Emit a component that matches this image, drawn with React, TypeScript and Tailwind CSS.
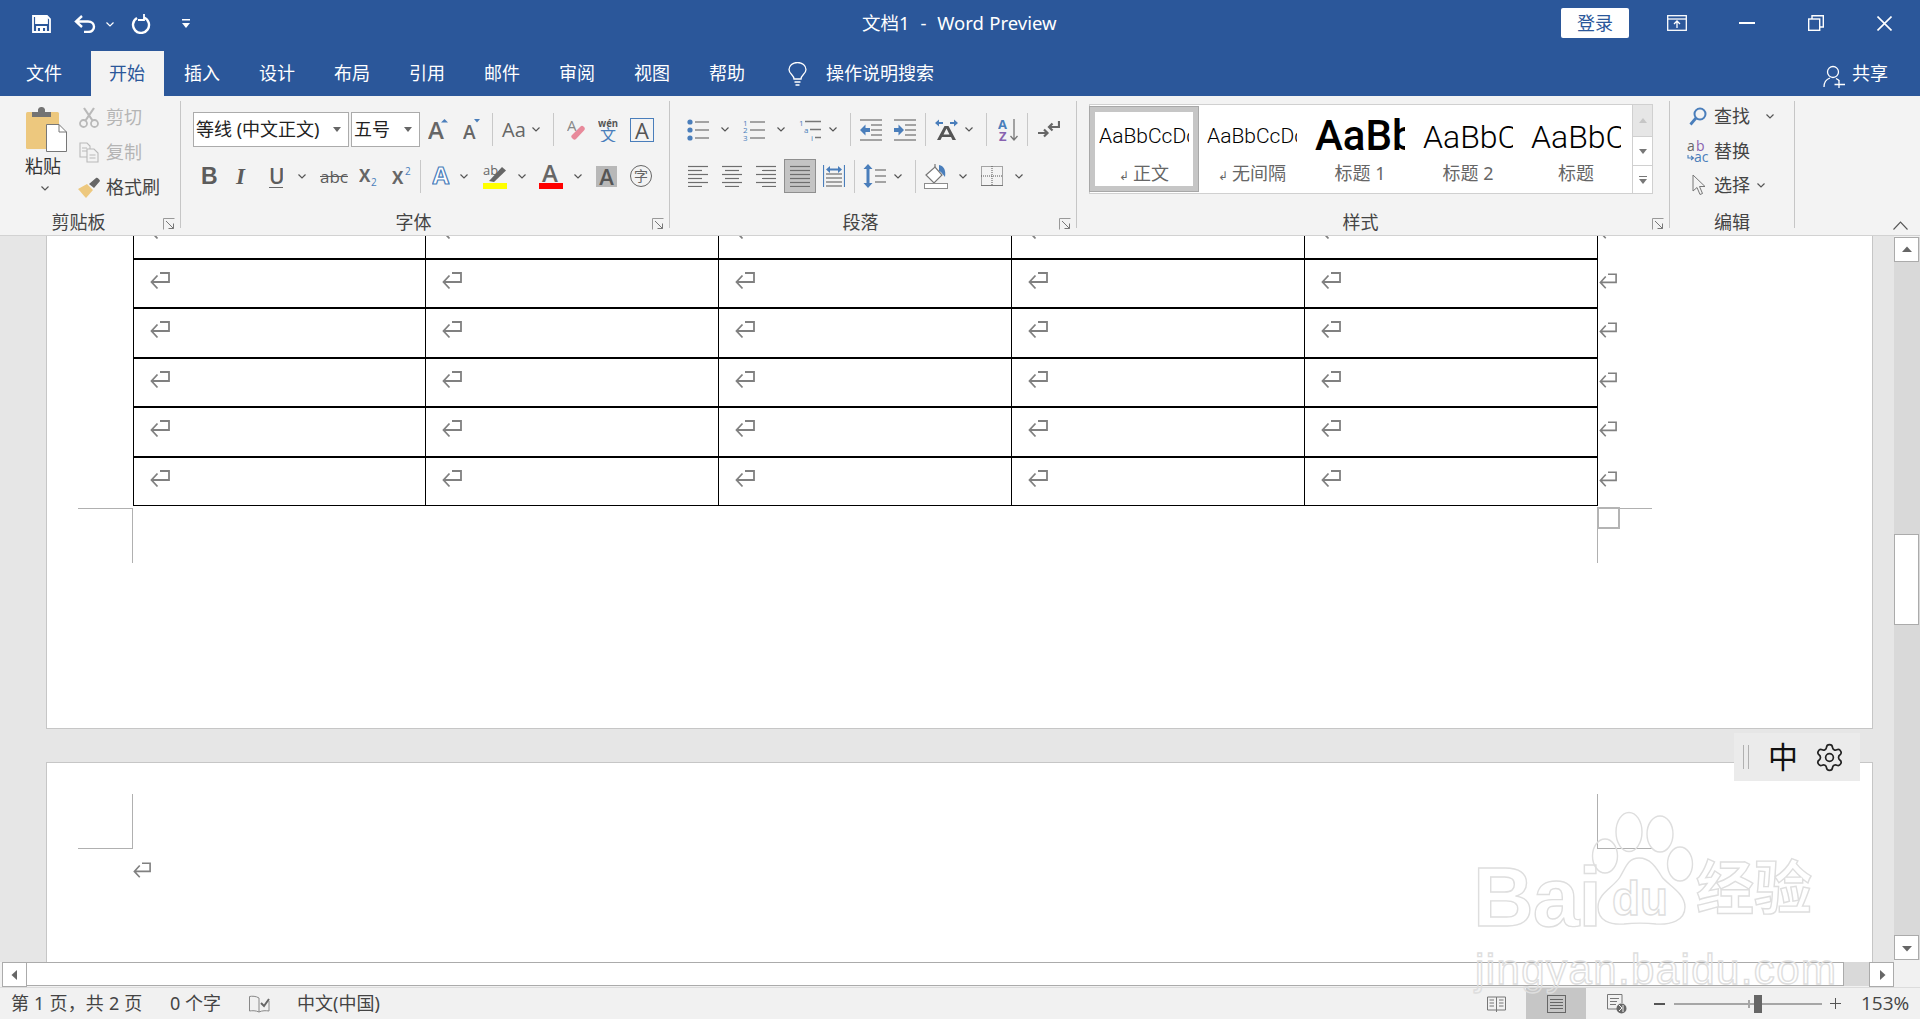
import React from 'react';
import { Settings } from 'lucide-react';

const BLUE = '#4a7ebb';
const GRAY = '#666666';
const cols = [0, 1, 2, 3, 4];
const tabs = ['插入', '设计', '布局', '引用', '邮件', '审阅', '视图', '帮助'];
const rows = [0, 1, 2, 3, 4, 5];

const svgFont = "font-['Open_Sans','Noto_Sans_CJK_SC',sans-serif]";

function Ret({ w = 20, h = 18 }: { w?: number; h?: number }) {
  return (
    <svg width={w} height={h} viewBox="0 0 20 18" fill="none" stroke="#808080" strokeWidth="1.8" className="block">
      <path d="M10 1H19V10H1.5M7.5 3.5L1.5 10L7.5 16.5" />
    </svg>
  );
}

function Chev({ c = '' }: { c?: string }) {
  return (
    <svg width="8" height="5" viewBox="0 0 8 5" fill="none" stroke="#555" strokeWidth="1.2" className={`block shrink-0 ${c}`}>
      <path d="M0.5 0.5L4 4L7.5 0.5" />
    </svg>
  );
}

function Launcher() {
  return (
    <svg width="12" height="12" viewBox="0 0 12 12" fill="none" stroke="#777" strokeWidth="1" className="block mt-[6px]">
      <path d="M0.5 11.5V0.5H11.5" stroke="#999" />
      <path d="M3 3L10.5 10.5M10.5 5.5V10.5H5.5" />
    </svg>
  );
}

function VSep({ c = '' }: { c?: string }) {
  return <div className={`w-px h-[33px] bg-[#c8c8c8] shrink-0 ${c}`} />;
}

function GroupSep() {
  return <div className="w-px h-[127px] bg-[#c6c6c6] shrink-0" />;
}

function GroupLabel({ text, launcher = true, pr = 'pr-[6px]' }: { text: string; launcher?: boolean; pr?: string }) {
  return (
    <div className="mt-auto flex h-[20px]">
      <div className={`flex-1 text-center leading-[20px] text-[18px] text-[#444] ${launcher ? pr : ''}`}>{text}</div>
      {launcher && <Launcher />}
      {launcher && <div className="w-[5px]" />}
    </div>
  );
}

function Lines({ w, ys, c = '#777', x = 0 }: { w: number; ys: number[]; c?: string; x?: number }) {
  return (
    <g stroke={c} strokeWidth="1.3">
      {ys.map(y => (
        <path key={y} d={`M${x} ${y}H${w}`} />
      ))}
    </g>
  );
}

function AlignIcon({ kind }: { kind: 'l' | 'c' | 'r' | 'j' }) {
  const ys = [1, 5, 9, 13, 17, 21];
  const segs: [number, number][] = ys.map((_, i) => {
    if (kind === 'j') return [0, 20];
    const len = i % 2 === 0 ? 20 : 14;
    if (kind === 'l') return [0, len];
    if (kind === 'r') return [20 - len, 20];
    return [10 - len / 2, 10 + len / 2];
  });
  return (
    <svg width="20" height="22" viewBox="0 0 20 22" stroke="#6e6e6e" strokeWidth="1.2" className="block">
      {ys.map((y, i) => (
        <path key={y} d={`M${segs[i][0]} ${y + 0.5}H${segs[i][1]}`} />
      ))}
    </svg>
  );
}

function PasteIcon() {
  return (
    <svg width="41" height="45" viewBox="0 0 41 45" className="block">
      <rect x="0" y="5" width="33" height="37" rx="1.5" fill="#edc87e" />
      <path d="M6 5h6V2.5a3 3 0 0 1 3-2.5h1a3 3 0 0 1 3 2.5V5h6v5H6z" fill="#737373" />
      <path d="M20.5 17.5H33L40.5 25V44.5H20.5z" fill="#fff" stroke="#777" />
      <path d="M33 17.5V25H40.5" fill="none" stroke="#777" />
    </svg>
  );
}

function TitleBar() {
  return (
    <div className="h-[51px] flex items-center shrink-0 text-white pb-[5px]">
      <div className="w-[862px] flex items-center shrink-0 pl-[32px] pt-[2px]">
        <svg width="19" height="18" viewBox="0 0 19 18" fill="none" stroke="#fff" strokeWidth="1.8" className="block">
          <path d="M1 1H15L18 4V17H1Z" />
          <path d="M4 1V8H15V1" fill="#fff" />
          <path d="M5 17V12H14V17" />
          <rect x="8" y="13" width="3" height="4" fill="#fff" stroke="none" />
        </svg>
        <svg width="22" height="18" viewBox="0 0 22 18" fill="none" stroke="#fff" strokeWidth="2.4" className="block ml-[23px]">
          <path d="M8 1L2 6.5L8 12M2 6.5H14C22 6.5 22 17 14 17H10" />
        </svg>
        <Chev c="ml-[10px] [&>path]:stroke-white" />
        <svg width="21" height="20" viewBox="0 0 21 20" fill="none" stroke="#fff" strokeWidth="2.4" className="block ml-[17px]">
          <path d="M13 3.5A8 8 0 1 1 6 4" />
          <path d="M13 0V6H7" strokeWidth="1.8" />
        </svg>
        <svg width="8" height="10" viewBox="0 0 8 10" fill="#fff" className="block ml-[30px]">
          <rect x="0" y="0" width="8" height="1.5" />
          <path d="M0 4H8L4 9Z" />
        </svg>
      </div>
      <div className="text-[18.5px] whitespace-pre [word-spacing:0.6px]">文档1  -  Word Preview</div>
      <div className="ml-auto flex items-center pr-[28px]">
        <button className="w-[68px] h-[30px] bg-white rounded-[2px] text-[#2b579a] text-[18px] leading-[30px]">登录</button>
        <svg width="20" height="16" viewBox="0 0 20 16" fill="none" stroke="#fff" strokeWidth="1.3" className="block ml-[38px]">
          <rect x="0.7" y="0.7" width="18.6" height="14.6" />
          <path d="M0.7 4H19.3" />
          <path d="M10 13V6.5M7 9L10 6L13 9" />
        </svg>
        <div className="w-[16px] h-[2px] bg-white ml-[52px]" />
        <svg width="16" height="16" viewBox="0 0 16 16" fill="none" stroke="#fff" strokeWidth="1.4" className="block ml-[53px]">
          <rect x="0.7" y="4" width="11" height="11.3" />
          <path d="M4 4V0.7H15.3V12H11.7" />
        </svg>
        <svg width="15" height="15" viewBox="0 0 15 15" fill="none" stroke="#fff" strokeWidth="1.6" className="block ml-[53px]">
          <path d="M0.5 0.5L14.5 14.5M14.5 0.5L0.5 14.5" />
        </svg>
      </div>
    </div>
  );
}

function TabBar() {
  return (
    <div className="h-[45px] flex shrink-0 text-white text-[18px] leading-[45px]">
      <div className="ml-[8px] w-[83px] pl-[18px]">文件</div>
      <div className="w-[73px] mr-[2px] pl-[18px] bg-[#f3f3f3] text-[#2b579a]">开始</div>
      {tabs.map(t => (
        <div key={t} className="w-[75px] pl-[18px]">{t}</div>
      ))}
      <svg width="19" height="24" viewBox="0 0 19 24" fill="none" stroke="#fff" strokeWidth="1.3" className="block ml-[22px] mt-[11px]">
        <path d="M6 17C6 13 1 12 1 7.5A8.5 7 0 0 1 18 7.5C18 12 13 13 13 17Z" />
        <path d="M6.5 20H12.5M7.5 23H11.5" />
      </svg>
      <div className="ml-[19px]">操作说明搜索</div>
      <div className="ml-auto flex pr-[32px]">
        <svg width="22" height="23" viewBox="0 0 22 23" fill="none" stroke="#fff" strokeWidth="1.3" className="block mt-[14px]">
          <circle cx="10" cy="7" r="5.5" />
          <path d="M1 22C1 17 4 14 7 13M13 13.5C14 14 15 14.5 16 15.5" />
          <path d="M16 15V23M11.5 19.5H22" />
        </svg>
        <span className="ml-[7px]">共享</span>
      </div>
    </div>
  );
}

function ClipboardGroup() {
  return (
    <div className="w-[180px] h-[131px] flex flex-col shrink-0">
      <div className="flex">
        <div className="w-[42px] ml-[25px] mt-[6px] flex flex-col">
          <div className="ml-[1px]"><PasteIcon /></div>
          <div className="text-[18px] leading-[24px] text-[#333] mt-[2px]">粘贴</div>
          <Chev c="ml-[16px] mt-[8px]" />
        </div>
        <div className="ml-[11px] flex flex-col text-[18px]">
          <div className="h-[33px] flex items-center text-[#b5b5b5]">
            <svg width="20" height="21" viewBox="0 0 20 21" fill="none" stroke="#b9b9b9" strokeWidth="1.8" className="block ml-[1px]">
              <circle cx="4.5" cy="16.5" r="3.5" />
              <circle cx="15.5" cy="16.5" r="3.5" />
              <path d="M6.5 13.5L15 1M13.5 13.5L5 1" strokeWidth="2.2" />
            </svg>
            <span className="ml-[7px]">剪切</span>
          </div>
          <div className="h-[36px] flex items-center text-[#b5b5b5]">
            <svg width="20" height="21" viewBox="0 0 20 21" fill="none" stroke="#b9b9b9" strokeWidth="1.1" className="block ml-[1px]">
              <path d="M1 1H8L11 4V15H1ZM3 6H8M3 9H8" />
              <path d="M8 7H15L19 11V20H8Z" fill="#f3f3f3" />
              <path d="M10.5 13H16.5M10.5 16H16.5" />
            </svg>
            <span className="ml-[7px]">复制</span>
          </div>
          <div className="h-[34px] flex items-center text-[#444]">
            <svg width="23" height="21" viewBox="0 0 23 21" className="block">
              <path d="M0 12L9 7L15 13L8 21C5 18 3 15 0 12Z" fill="#edc87e" />
              <path d="M11 7L18 1C19 0 22 2.5 22 4L16 11Z" fill="#666" />
            </svg>
            <span className="ml-[5px]">格式刷</span>
          </div>
        </div>
      </div>
      <GroupLabel text="剪贴板" />
    </div>
  );
}

function Combo({ text, w }: { text: string; w: string }) {
  return (
    <div className={`${w} h-[35px] bg-white border border-[#ababab] flex items-center pl-[2px] pr-[7px] text-[18px] text-[#222] shrink-0`}>
      <span className="whitespace-nowrap">{text}</span>
      <svg width="8" height="5" viewBox="0 0 8 5" fill="#666" className="block ml-auto"><path d="M0 0H8L4 5Z" /></svg>
    </div>
  );
}

function FontGroup() {
  return (
    <div className="w-[488px] h-[131px] flex flex-col shrink-0">
      <div className="flex items-center h-[35px] mt-[11px]">
        <div className="ml-[12px]"><Combo text="等线 (中文正文)" w="w-[156px]" /></div>
        <div className="ml-[2px]"><Combo text="五号" w="w-[69px]" /></div>
        <svg width="20" height="21" viewBox="0 0 20 21" className="block ml-[8px]">
          <text x="0" y="20" fontSize="24" fontWeight="600" fill={GRAY} className={svgFont}>A</text>
          <path d="M13 3.5H20L16.5 0Z" fill={BLUE} />
        </svg>
        <svg width="17" height="21" viewBox="0 0 17 21" className="block ml-[15px]">
          <text x="0" y="20" fontSize="19" fontWeight="600" fill={GRAY} className={svgFont}>A</text>
          <path d="M11 0H17L14 3.5Z" fill={BLUE} />
        </svg>
        <VSep c="ml-[12px]" />
        <span className="ml-[9px] w-[23px] whitespace-nowrap text-[20px] leading-[28px] text-[#666] font-['Open_Sans',sans-serif]">Aa</span>
        <Chev c="ml-[7px]" />
        <VSep c="ml-[13px]" />
        <svg width="18" height="23" viewBox="0 0 18 23" className="block ml-[13px]">
          <text x="0" y="13" fontSize="15" fill="#888" className={svgFont}>A</text>
          <path d="M5 17L13.5 8.5C14.5 7.5 15.5 7.5 16.5 8.5L17.5 9.5C18 10.5 18 11.5 17 12.5L9 21C8 22 7 22 6 21L5 20C4 19 4 18 5 17Z" fill="#e8899a" />
        </svg>
        <svg width="20" height="24" viewBox="0 0 20 24" className="block ml-[13px]">
          <text x="0" y="9" fontSize="10" fontWeight="700" fill="#555" textLength="20" lengthAdjust="spacingAndGlyphs" className={svgFont}>wén</text>
          <text x="2" y="23" fontSize="16" fill={BLUE} className="font-['Noto_Sans_CJK_SC',sans-serif]">文</text>
        </svg>
        <div className="ml-[12px] w-[24px] h-[24px] border border-[#4a7ebb] flex items-center justify-center text-[22px] leading-none text-[#555] font-['Open_Sans',sans-serif]">A</div>
      </div>
      <div className="flex items-center h-[34px] mt-[12px] text-[#5c5c5c]">
        <span className="ml-[20px] w-[14px] text-[23px] font-bold font-['Liberation_Sans',sans-serif] leading-none">B</span>
        <span className="ml-[21px] w-[11px] text-[23px] font-bold italic font-['Liberation_Serif',serif] leading-none">I</span>
        <span className="ml-[22px] w-[14px] text-[21px] font-semibold font-['Open_Sans',sans-serif] leading-[22px] border-b-[1.5px] border-[#666] overflow-hidden">U</span>
        <Chev c="ml-[15px]" />
        <span className="ml-[14px] w-[25px] text-[17px] font-['Open_Sans',sans-serif] line-through leading-none">abc</span>
        <svg width="18" height="20" viewBox="0 0 18 20" className="block ml-[14px]">
          <text x="0" y="16" fontSize="17" fontWeight="700" fill={GRAY} className={svgFont}>X</text>
          <text x="12" y="20" fontSize="10" fill={BLUE} className={svgFont}>2</text>
        </svg>
        <svg width="19" height="20" viewBox="0 0 19 20" className="block ml-[15px]">
          <text x="0" y="18" fontSize="17" fontWeight="700" fill={GRAY} className={svgFont}>X</text>
          <text x="13" y="9" fontSize="10" fill={BLUE} className={svgFont}>2</text>
        </svg>
        <VSep c="ml-[9px]" />
        <svg width="18" height="20" viewBox="0 0 18 20" className="block ml-[11px]">
          <text x="0.5" y="18" fontSize="24" fontWeight="700" fill="#fff" stroke={BLUE} strokeWidth="1.2" className={svgFont}>A</text>
        </svg>
        <Chev c="ml-[10px]" />
        <svg width="24" height="25" viewBox="0 0 24 25" className="block ml-[15px]">
          <text x="0" y="11" fontSize="13" fill="#666" className={svgFont}>ab</text>
          <path d="M6 17L19 3L23 6.5L11 18Z" fill="#666" />
          <rect x="0" y="19" width="24" height="6" fill="#ffff00" />
        </svg>
        <Chev c="ml-[11px]" />
        <svg width="24" height="25" viewBox="0 0 24 25" className="block ml-[13px]">
          <text x="3" y="18" fontSize="24" fontWeight="600" fill={GRAY} className={svgFont}>A</text>
          <rect x="0" y="19" width="24" height="6" fill="#ff0000" />
        </svg>
        <Chev c="ml-[11px]" />
        <div className="ml-[14px] w-[21px] h-[21px] bg-[#b8b8b8] flex items-center justify-center text-[22px] font-semibold leading-none text-[#555] font-['Open_Sans',sans-serif]">A</div>
        <div className="ml-[13px] w-[22px] h-[22px] rounded-full border-[1.5px] border-[#666] flex items-center justify-center text-[14px] leading-none text-[#666]">字</div>
      </div>
      <GroupLabel text="字体" />
    </div>
  );
}

function ParagraphGroup() {
  return (
    <div className="w-[406px] h-[131px] flex flex-col shrink-0">
      <div className="flex items-center h-[35px] mt-[11px]">
        <svg width="22" height="22" viewBox="0 0 22 22" className="block ml-[17px]">
          <circle cx="3" cy="3" r="2.6" fill={BLUE} /><circle cx="3" cy="11" r="2.6" fill={BLUE} /><circle cx="3" cy="19" r="2.6" fill={BLUE} />
          <Lines x={8} w={22} ys={[3, 11, 19]} />
        </svg>
        <Chev c="ml-[12px]" />
        <svg width="22" height="22" viewBox="0 0 22 22" className="block ml-[14px]">
          <g fontSize="8" fill={BLUE} className={svgFont}>
            <text x="0" y="7">1</text><text x="0" y="14">2</text><text x="0" y="22">3</text>
          </g>
          <Lines x={7} w={22} ys={[3, 11, 19]} />
        </svg>
        <Chev c="ml-[12px]" />
        <svg width="22" height="22" viewBox="0 0 22 22" className="block ml-[14px]">
          <g fontSize="8" fill={BLUE} className={svgFont}>
            <text x="0" y="7">1</text><text x="5" y="14">a</text><text x="12" y="22">i</text>
          </g>
          <path d="M6 2.5H22M11 10.5H22M16 18.5H22" stroke="#777" strokeWidth="1.3" />
        </svg>
        <Chev c="ml-[8px]" />
        <VSep c="ml-[13px]" />
        <svg width="22" height="22" viewBox="0 0 22 22" className="block ml-[9px]">
          <Lines w={22} ys={[1, 21]} />
          <Lines x={11} w={22} ys={[6, 11, 16]} />
          <path d="M0 11L5.5 5.5V9H10V13H5.5V16.5Z" fill={BLUE} />
        </svg>
        <svg width="22" height="22" viewBox="0 0 22 22" className="block ml-[12px]">
          <Lines w={22} ys={[1, 21]} />
          <Lines x={11} w={22} ys={[6, 11, 16]} />
          <path d="M10 11L4.5 5.5V9H0V13H4.5V16.5Z" fill={BLUE} />
        </svg>
        <VSep c="ml-[9px]" />
        <svg width="23" height="22" viewBox="0 0 23 22" className="block ml-[9px]">
          <path d="M0 4L4 0.5V3H8V5H4V7.5ZM23 4L19 0.5V3H15V5H19V7.5Z" fill={BLUE} />
          <path d="M2 21L9.5 7H13.5L21 21H17.5L16 18H7L5.5 21ZM8.5 15.5H14.5L11.5 9.5Z" fill="#555" />
        </svg>
        <Chev c="ml-[7px]" />
        <VSep c="ml-[13px]" />
        <svg width="22" height="24" viewBox="0 0 22 24" className="block ml-[11px]">
          <text x="0" y="11" fontSize="13" fontWeight="700" fill={BLUE} className={svgFont}>A</text>
          <text x="1" y="23" fontSize="13" fontWeight="700" fill="#8862b0" className={svgFont}>Z</text>
          <path d="M16 1V22M12.5 18L16 22L19.5 18" fill="none" stroke="#777" strokeWidth="1.3" />
        </svg>
        <VSep c="ml-[7px]" />
        <svg width="22" height="19" viewBox="0 0 22 19" fill="none" stroke="#666" strokeWidth="2.2" className="block ml-[10px]">
          <path d="M21 1V7H11M14.5 3.5L11 7L14.5 10.5" />
          <path d="M0 13H9M6 9.5L9.5 13L6 16.5" />
        </svg>
      </div>
      <div className="flex items-center h-[34px] mt-[12px]">
        <div className="ml-[18px]"><AlignIcon kind="l" /></div>
        <div className="ml-[14px]"><AlignIcon kind="c" /></div>
        <div className="ml-[14px]"><AlignIcon kind="r" /></div>
        <div className="ml-[8px] w-[32px] h-[34px] bg-[#c4c4c4] border border-[#8f8f8f] flex items-center justify-center"><AlignIcon kind="j" /></div>
        <svg width="22" height="22" viewBox="0 0 22 22" className="block ml-[7px]">
          <path d="M0.5 0V22M21.5 0V22" stroke={BLUE} strokeWidth="1.2" />
          <Lines x={3} w={19} ys={[9, 13, 17, 21]} />
          <path d="M3 4.5L7 1V3.5H15V1L19 4.5L15 8V5.5H7V8Z" fill={BLUE} />
        </svg>
        <VSep c="ml-[9px]" />
        <svg width="23" height="24" viewBox="0 0 23 24" className="block ml-[8px]">
          <path d="M5 0L9.5 5H6.5V19H9.5L5 24L0.5 19H3.5V5H0.5Z" fill={BLUE} />
          <Lines x={12} w={23} ys={[6, 12, 18]} />
        </svg>
        <Chev c="ml-[8px]" />
        <VSep c="ml-[13px]" />
        <svg width="24" height="25" viewBox="0 0 24 25" className="block ml-[8px]">
          <path d="M2 11L11 3L18 11L10 19Z" fill="#fff" stroke="#777" strokeWidth="1.2" />
          <path d="M11 3V0" stroke="#777" strokeWidth="1.2" />
          <path d="M15 1C20 2 22 6 21 13C19 11 18 8 15 7Z" fill={BLUE} />
          <rect x="0.5" y="19.5" width="23" height="5" fill="#fff" stroke="#8c8c8c" />
        </svg>
        <Chev c="ml-[11px]" />
        <svg width="22" height="20" viewBox="0 0 22 20" fill="none" stroke="#555" strokeWidth="1" strokeDasharray="1 1" className="block ml-[14px]">
          <rect x="0.5" y="0.5" width="21" height="19" />
          <path d="M11 0V20M0 10H22" />
          <path d="M0 19.5H22" strokeDasharray="none" stroke="#777" />
        </svg>
        <Chev c="ml-[12px]" />
      </div>
      <GroupLabel text="段落" pr="pr-[8px]" />
    </div>
  );
}

function StyleItem({ preview, label, selected, arrow }: { preview: React.ReactNode; label: string; selected?: boolean; arrow?: boolean }) {
  return (
    <div className="relative w-[108px] h-[84px] mt-[2px] shrink-0 flex flex-col">
      <div className="mx-[9px] w-[90px] h-[54px] pt-[6px] overflow-hidden flex items-center whitespace-nowrap text-black">{preview}</div>
      <div className="h-[24px] leading-[24px] text-center text-[18px] text-[#666]">
        {arrow && <span className="text-[12px] mr-[4px]">↲</span>}
        {label}
      </div>
      {selected && <div className="absolute inset-0 border-[5px] border-[#c6c6c6] outline outline-[#a8a8a8]" />}
    </div>
  );
}

function GalleryBtn({ c, tri, more }: { c: string; tri: string; more?: boolean }) {
  return (
    <div className={`w-[21px] flex flex-col items-center justify-center ${c}`}>
      {more && <div className="w-[8px] h-px mb-[2px]" style={{ backgroundColor: tri }} />}
      <svg width="8" height="5" viewBox="0 0 8 5" fill={tri} className="block"><path d="M0 0H8L4 5Z" /></svg>
    </div>
  );
}

function StylesGroup() {
  const body = "font-['Roboto',sans-serif] font-light text-[21px]";
  const head = "font-['Roboto',sans-serif] font-light text-[32px]";
  return (
    <div className="w-[592px] h-[131px] flex flex-col shrink-0">
      <div className="ml-[12px] mt-[3px] w-[564px] h-[90px] bg-white border border-[#d0d0d0] flex">
        <StyleItem selected arrow label="正文" preview={<span className={body}>AaBbCcDc</span>} />
        <StyleItem arrow label="无间隔" preview={<span className={body}>AaBbCcDc</span>} />
        <StyleItem label="标题 1" preview={<span className="font-['Roboto',sans-serif] font-medium text-[42px] -mt-[3px]">AaBbC</span>} />
        <StyleItem label="标题 2" preview={<span className={head}>AaBbC</span>} />
        <StyleItem label="标题" preview={<span className={head}>AaBbC</span>} />
        <div className="ml-auto flex flex-col h-[90px] -mt-px -mr-px">
          <div className="h-[33px] w-[21px] bg-[#e6e6e6] border border-[#d0d0d0] flex items-center justify-center">
            <svg width="8" height="5" viewBox="0 0 8 5" fill="#c6c6c6" className="block"><path d="M0 5H8L4 0Z" /></svg>
          </div>
          <GalleryBtn c="h-[29px] bg-white border border-t-0 border-[#d0d0d0]" tri="#777" />
          <GalleryBtn c="h-[28px] bg-white border border-t-0 border-[#d0d0d0]" tri="#777" more />
        </div>
      </div>
      <GroupLabel text="样式" pr="pr-[8px]" />
    </div>
  );
}

function EditGroup() {
  return (
    <div className="w-[124px] h-[131px] flex flex-col shrink-0 text-[18px] text-[#444]">
      <div className="h-[30px] flex items-center pl-[19px]">
        <svg width="18" height="19" viewBox="0 0 18 19" fill="none" stroke={BLUE} strokeWidth="2" className="block">
          <circle cx="11" cy="7" r="5.5" />
          <path d="M7 11L1.5 17.5" strokeWidth="2.8" />
        </svg>
        <span className="ml-[7px]">查找</span>
        <Chev c="ml-[16px]" />
      </div>
      <div className="h-[40px] flex items-center pl-[17px]">
        <svg width="23" height="22" viewBox="0 0 23 22" className="block">
          <text x="0" y="11" fontSize="14" fill="#666" className={svgFont}>a</text>
          <text x="9" y="11" fontSize="14" fill="#8862b0" className={svgFont}>b</text>
          <text x="7" y="22" fontSize="14" fill={BLUE} className={svgFont}>ac</text>
          <path d="M1 15V18H6M4 16L6.5 18L4 20" fill="none" stroke={BLUE} strokeWidth="1.1" />
        </svg>
        <span className="ml-[4px]">替换</span>
      </div>
      <div className="h-[28px] flex items-center pl-[22px]">
        <svg width="14" height="22" viewBox="0 0 14 22" fill="#f3f3f3" stroke="#777" strokeWidth="1" className="block">
          <path d="M1 1V17L5 13.5L8 20.5L10.5 19.5L7.5 12.5H13Z" />
        </svg>
        <span className="ml-[8px]">选择</span>
        <Chev c="ml-[7px]" />
      </div>
      <GroupLabel text="编辑" launcher={false} />
    </div>
  );
}

function Ribbon() {
  return (
    <div className="h-[140px] bg-[#f3f3f3] border-b border-[#d2d2d2] flex pt-[5px] shrink-0">
      <ClipboardGroup />
      <GroupSep />
      <FontGroup />
      <GroupSep />
      <ParagraphGroup />
      <GroupSep />
      <StylesGroup />
      <GroupSep />
      <EditGroup />
      <GroupSep />
      <svg width="15" height="9" viewBox="0 0 15 9" fill="none" stroke="#555" strokeWidth="1.1" className="block ml-[98px] mt-[120px]">
        <path d="M0.5 8.5L7.5 1L14.5 8.5" />
      </svg>
    </div>
  );
}

function Page1() {
  return (
    <div className="relative ml-[46px] w-[1827px] h-[529px] -mt-[36px] pt-[9px] pl-[86px] bg-white border border-[#c6c6c6] shrink-0">
      {rows.map(r => (
        <div key={r} className={`flex ${r === 5 ? 'h-[48px]' : 'h-[49.6px]'}`}>
          {cols.map(i => (
            <div key={i} className={`w-[293px] pl-[16px] pt-[12px] border-r border-black ${i === 0 ? 'border-l' : ''} ${r === 5 ? 'border-b' : 'border-b-2'}`}>
              <Ret />
            </div>
          ))}
          <div className="pt-[13px] ml-[1px]"><Ret w={18} h={17} /></div>
        </div>
      ))}
      <div className="absolute left-[31px] bottom-[165px] w-[55px] h-[55px] border-t border-r border-[#b0b0b0]" />
      <div className="absolute left-[1550px] bottom-[165px] w-[1px] h-[34px] bg-[#b0b0b0]" />
      <div className="absolute left-[1550px] bottom-[199px] w-[23px] h-[22px] border-2 border-[#b4b4b4]" />
      <div className="absolute left-[1573px] bottom-[219px] w-[32px] h-px bg-[#b0b0b0]" />
    </div>
  );
}

function Page2() {
  return (
    <div className="relative ml-[46px] mt-[33px] w-[1827px] h-[400px] pt-[99px] pl-[86px] bg-white border border-[#c6c6c6] shrink-0">
      <Ret w={18} h={17} />
      <div className="absolute left-[31px] top-[31px] w-[55px] h-[55px] border-b border-r border-[#b0b0b0]" />
      <div className="absolute left-[1550px] top-[31px] w-[55px] h-[55px] border-b border-l border-[#b0b0b0]" />
    </div>
  );
}

function ScrollBtn({ c, d }: { c: string; d: string }) {
  return (
    <div className={`w-[25px] h-[25px] bg-white border border-[#ababab] flex items-center justify-center shrink-0 ${c}`}>
      <svg width="12" height="12" viewBox="0 0 12 12" fill="#666" className="block"><path d={d} /></svg>
    </div>
  );
}

function Watermark() {
  const stroke = "text-transparent [-webkit-text-stroke:1.4px_#dedede] font-['Liberation_Sans',sans-serif] leading-none";
  return (
    <div className="absolute left-[1473px] top-[830px] w-[350px] h-[150px] pointer-events-none">
      <div className="flex items-start mt-[25px]">
        <span className={`${stroke} font-bold w-[119px] text-[84px] tracking-[-1px]`}>Bai</span>
        <svg width="104" height="116" viewBox="0 0 104 116" fill="none" stroke="#dedede" strokeWidth="1.4" className="block -mt-[44px] -ml-[2px] shrink-0">
          <ellipse cx="15" cy="45" rx="12.5" ry="17" />
          <ellipse cx="39" cy="21" rx="13" ry="19.5" />
          <ellipse cx="70" cy="23" rx="13" ry="18" />
          <ellipse cx="90" cy="53" rx="12.5" ry="17" />
          <path d="M49 47C60 47 66 56 72 66C78 74 95 82 95 96C95 110 80 114 66 113C58 112 42 112 34 113C20 114 8 110 8 96C8 82 24 76 30 66C36 56 38 47 49 47Z" />
          <text x="22" y="104" fontSize="48" fontWeight="700" textLength="56" lengthAdjust="spacingAndGlyphs" className="font-['Liberation_Sans',sans-serif]">du</text>
        </svg>
        <span className={`${stroke} font-bold text-[58px] ml-[2px] font-['Noto_Sans_CJK_SC',sans-serif]`}>经验</span>
      </div>
      <div className={`${stroke} text-[42px] ml-[2px] mt-[10px] tracking-[1.4px]`}>jingyan.baidu.com</div>
    </div>
  );
}

function StatusBar() {
  return (
    <div className="h-[32px] bg-[#f1f1f1] flex items-center shrink-0 text-[18px] text-[#444] border-t border-[#dcdcdc]">
      <span className="ml-[11px] whitespace-pre w-[132px] tracking-[0.2px]">第 1 页，共 2 页</span>
      <span className="ml-[27px] whitespace-pre w-[52px]">0 个字</span>
      <svg width="21" height="18" viewBox="0 0 21 18" fill="none" stroke="#888" strokeWidth="1" className="block ml-[27px]">
        <path d="M10 3C7 1 3 1 0.5 1.5V16C3 15.5 7 15.5 10 17C13 15.5 17 15.5 20 16V6" />
        <path d="M10 3V17" />
        <path d="M12 8L15 11L20 4" stroke="#666" strokeWidth="2" />
      </svg>
      <span className="ml-[27px]">中文(中国)</span>
      <div className="ml-auto flex items-center h-full pr-[11px]">
        <svg width="19" height="18" viewBox="0 0 19 18" fill="none" stroke="#777" strokeWidth="1" className="block">
          <path d="M9.5 2H0.5V15H9.5M9.5 2H18.5V15H9.5M9.5 2V17" />
          <path d="M2.5 5H7M2.5 8H7M2.5 11H7M12 5H16.5M12 8H16.5M12 11H16.5" />
        </svg>
        <div className="ml-[20px] w-[60px] h-full bg-[#c6c6c6] flex items-center justify-center">
          <svg width="19" height="18" viewBox="0 0 19 18" fill="none" stroke="#666" strokeWidth="1" className="block">
            <rect x="0.5" y="0.5" width="18" height="17" />
            <path d="M3 4.5H16M3 7.5H16M3 10.5H16M3 13.5H16" />
          </svg>
        </div>
        <svg width="20" height="20" viewBox="0 0 20 20" className="block ml-[21px]">
          <path d="M12 15H0.5V0.5H15V9" fill="none" stroke="#777" />
          <path d="M3 4.5H12M3 7.5H10M3 10.5H9" stroke="#777" />
          <circle cx="14.5" cy="14.5" r="5" fill="#666" />
          <path d="M12 11L15 14L12 17M16 11V18" stroke="#f1f1f1" fill="none" />
        </svg>
        <div className="ml-[27px] w-[11px] h-[2px] bg-[#555]" />
        <div className="relative ml-[9px] w-[148px] h-[2px] bg-[#a6a6a6]">
          <div className="absolute left-[74px] -top-[3px] w-[2px] h-[8px] bg-[#a6a6a6]" />
          <div className="absolute left-[80px] -top-[8px] w-[8px] h-[18px] bg-[#666]" />
        </div>
        <span className="relative ml-[8px] w-[11px] h-[11px]">
          <span className="absolute left-0 top-[5px] w-[11px] h-px bg-[#555]" />
          <span className="absolute left-[5px] top-0 w-px h-[11px] bg-[#555]" />
        </span>
        <span className="ml-[20px] w-[48px] text-[19px] whitespace-nowrap font-['Open_Sans',sans-serif]">153%</span>
      </div>
    </div>
  );
}

export default function App() {
  return (
    <div className="relative w-[1920px] h-[1019px] overflow-hidden flex flex-col bg-[#2b579a] font-['Noto_Sans','Noto_Sans_CJK_SC',sans-serif]">
      <TitleBar />
      <TabBar />
      <Ribbon />
      <div className="flex-1 flex min-h-0">
        <div className="w-[1894px] flex flex-col min-h-0">
          <div className="relative flex-1 min-h-0 overflow-hidden bg-[#e6e6e6] flex flex-col">
            <Page1 />
            <Page2 />
            <div className="absolute left-[1734px] top-[497px] w-[126px] h-[48px] bg-[#ebebeb] flex items-center">
              <div className="ml-[9px] w-[6px] h-[24px] border-x border-[#b0b0b0]" />
              <span className="ml-[19px] text-[30px] leading-none text-[#111]">中</span>
              <Settings size={31} strokeWidth={1.3} className="ml-[16px] text-[#222]" />
            </div>
          </div>
          <div className="h-[25px] flex bg-[#f1f1f1] shrink-0 items-start pl-[2px]">
            <ScrollBtn c="h-[24px]" d="M8 1V11L2.5 6Z" />
            <div className="w-[1817px] h-[24px] bg-white border border-l-0 border-[#ababab]" />
            <div className="w-[25px] h-[24px] bg-[#d9d9d9]" />
            <ScrollBtn c="h-[24px]" d="M4 1V11L9.5 6Z" />
          </div>
        </div>
        <div className="w-[26px] bg-[#f1f1f1] flex flex-col pt-px">
          <div className="h-[723px] bg-[#d9d9d9] flex flex-col">
            <ScrollBtn c="" d="M1 8H11L6 2.5Z" />
            <div className="mt-[272px] w-[25px] h-[91px] bg-white border border-[#ababab]" />
            <ScrollBtn c="mt-auto" d="M1 4H11L6 9.5Z" />
          </div>
        </div>
      </div>
      <StatusBar />
      <Watermark />
    </div>
  );
}
